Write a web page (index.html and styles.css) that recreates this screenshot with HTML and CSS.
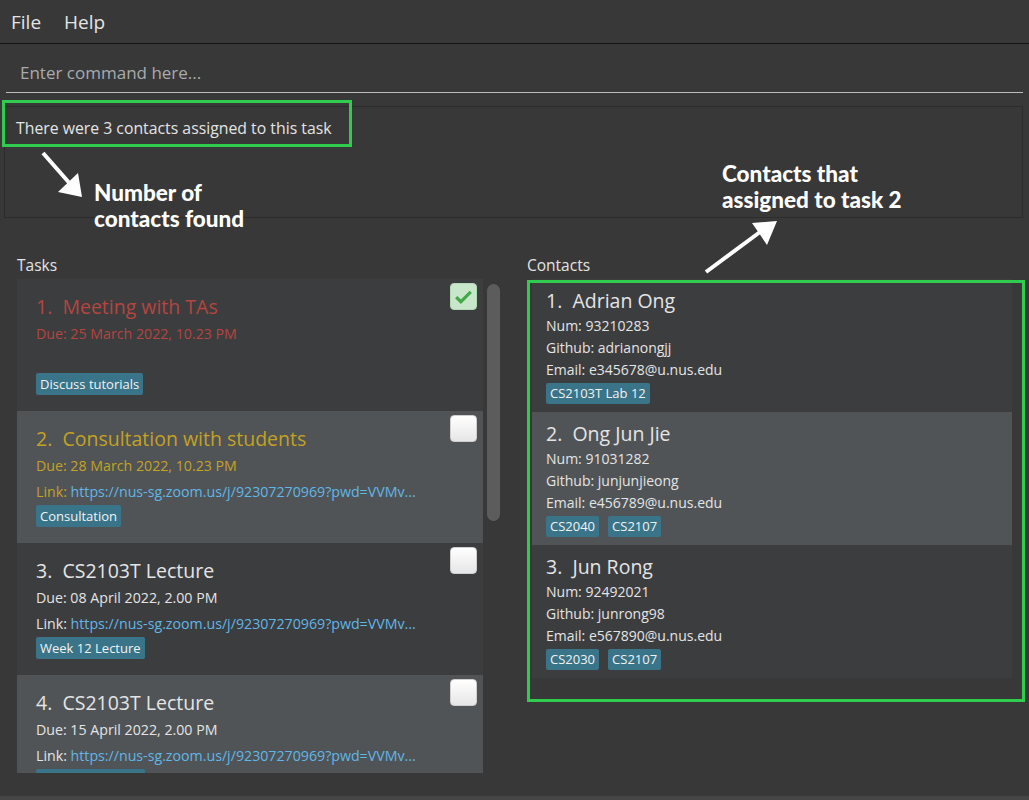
FILE: index.html
```html
<html>
  <head>
    <title>Task manager</title>
    <link rel="stylesheet" href="styles.css">
  </head>
  <body>
    <nav class="menubar">
      <span>File</span>
      <span>Help</span>
    </nav>

    <div class="command">
      <div class="command-input">Enter command here...</div>
    </div>

    <div class="result">
      <p>There were 3 contacts assigned to this task</p>
    </div>

    <main class="panels">
      <section class="panel">
        <h2>Tasks</h2>
        <div class="task-wrap">
          <ul class="task-list">
            <li class="task dark done">
              <div class="task-body">
                <div class="title">1.&nbsp;&nbsp;Meeting with TAs</div>
                <div class="row">Due: 25 March 2022, 10.23 PM</div>
                <div class="row"></div>
                <div class="row"><span class="tag">Discuss tutorials</span></div>
              </div>
              <span class="check checked">
                <svg viewBox="0 0 24 24"><path d="M5 12.5l4.5 4.5L19 7.5" /></svg>
              </span>
            </li>
            <li class="task light soon">
              <div class="task-body">
                <div class="title">2.&nbsp;&nbsp;Consultation with students</div>
                <div class="row">Due: 28 March 2022, 10.23 PM</div>
                <div class="row">Link: <a>https://nus-sg.zoom.us/j/92307270969?pwd=VVMv...</a></div>
                <div class="row"><span class="tag">Consultation</span></div>
              </div>
              <span class="check"></span>
            </li>
            <li class="task dark">
              <div class="task-body">
                <div class="title">3.&nbsp;&nbsp;CS2103T Lecture</div>
                <div class="row">Due: 08 April 2022, 2.00 PM</div>
                <div class="row">Link: <a>https://nus-sg.zoom.us/j/92307270969?pwd=VVMv...</a></div>
                <div class="row"><span class="tag">Week 12 Lecture</span></div>
              </div>
              <span class="check"></span>
            </li>
            <li class="task light">
              <div class="task-body">
                <div class="title">4.&nbsp;&nbsp;CS2103T Lecture</div>
                <div class="row">Due: 15 April 2022, 2.00 PM</div>
                <div class="row">Link: <a>https://nus-sg.zoom.us/j/92307270969?pwd=VVMv...</a></div>
                <div class="row"><span class="tag">Week 12 Lecture</span></div>
              </div>
              <span class="check"></span>
            </li>
          </ul>
          <div class="scroll-track"><div class="scroll-thumb"></div></div>
        </div>
      </section>

      <section class="panel">
        <h2>Contacts</h2>
        <ul class="contact-list">
          <li class="contact dark">
            <div class="name">1.&nbsp;&nbsp;Adrian Ong</div>
            <div class="line">Num: 93210283</div>
            <div class="line">Github: adrianongjj</div>
            <div class="line">Email: e345678@u.nus.edu</div>
            <div class="tags"><span class="tag">CS2103T Lab 12</span></div>
          </li>
          <li class="contact light">
            <div class="name">2.&nbsp;&nbsp;Ong Jun Jie</div>
            <div class="line">Num: 91031282</div>
            <div class="line">Github: junjunjieong</div>
            <div class="line">Email: e456789@u.nus.edu</div>
            <div class="tags"><span class="tag">CS2040</span><span class="tag">CS2107</span></div>
          </li>
          <li class="contact dark">
            <div class="name">3.&nbsp;&nbsp;Jun Rong</div>
            <div class="line">Num: 92492021</div>
            <div class="line">Github: junrong98</div>
            <div class="line">Email: e567890@u.nus.edu</div>
            <div class="tags"><span class="tag">CS2030</span><span class="tag">CS2107</span></div>
          </li>
        </ul>
      </section>
    </main>

    <footer class="statusbar"></footer>

    <!-- callouts drawn over the app -->
    <div class="mark mark-result"></div>
    <div class="mark mark-contacts"></div>
    <svg class="arrows" width="1029" height="800">
      <line x1="43" y1="153" x2="72" y2="186" />
      <polygon points="58,192 82,197 78,173" />
      <line x1="706" y1="272" x2="760" y2="232" />
      <polygon points="752,223 777,221 767,245" />
    </svg>
    <div class="note note-found">Number of<br>contacts found</div>
    <div class="note note-assigned">Contacts that<br>assigned to task 2</div>
  </body>
</html>
```

FILE: styles.css
```css
body {
  margin: 0;
  width: 1029px;
  height: 800px;
  display: flex;
  flex-direction: column;
  position: relative;
  overflow: hidden;
  background: #383838;
  color: #e4e4e4;
  font-family: "Open Sans", "Noto Sans", sans-serif;
}
ul {
  list-style: none;
  margin: 0;
  padding: 0;
}
.menubar {
  height: 43px;
  display: flex;
  align-items: center;
  gap: 23px;
  padding-left: 11px;
  border-bottom: 1px solid #141414;
  font-size: 19px;
}
.command {
  padding: 0 6px;
}
.command-input {
  height: 38px;
  line-height: 38px;
  padding-top: 10px;
  padding-left: 14px;
  border-bottom: 1px solid #bcbcbc;
  color: #a8abaf;
  font-size: 17px;
}
.result {
  margin: 13px 6px 0 4px;
  height: 110px;
  border: 1px solid #2c2c2c;
}
.result p {
  margin: 0;
  padding: 10px 11px;
  line-height: 22px;
  font-size: 15.8px;
}
.panels {
  display: grid;
  grid-template-columns: 486px 498px;
  column-gap: 24px;
  padding-left: 17px;
  margin-top: 37px;
}
.panel h2 {
  margin: 0 0 4px;
  font-size: 15.5px;
  font-weight: normal;
  line-height: 20px;
}
.task-wrap {
  display: flex;
  height: 494px;
}
.task-list {
  width: 466px;
  flex-shrink: 0;
  overflow: hidden;
}
.scroll-track {
  width: 20px;
  box-sizing: border-box;
  padding: 5px 3px 0 4px;
}
.scroll-thumb {
  height: 237px;
  border-radius: 7px;
  background: #5c5c5c;
}
.dark {
  background: #3c3d3f;
}
.light {
  background: #505457;
}
.task {
  height: 132px;
  display: flex;
  padding: 4px 6px 0 19px;
  box-sizing: border-box;
}
.task-body {
  flex: 1;
  padding-top: 10px;
}
.title {
  font-size: 19.5px;
  line-height: 28px;
}
.row {
  height: 26px;
  line-height: 26px;
  font-size: 14.2px;
}
.done .title,
.done .row {
  color: #b5453f;
}
.soon .title,
.soon .row {
  color: #c4a223;
}
.row a {
  color: #62b6e6;
}
.tag {
  display: inline-block;
  padding: 0 4px;
  line-height: 22px;
  border-radius: 2px;
  background: #3a7489;
  color: #f2f2f2;
  font-size: 13px;
}
.check {
  width: 27px;
  height: 27px;
  box-sizing: border-box;
  border-radius: 4px;
  border: 1px solid #cfcfcf;
  background: linear-gradient(#ffffff, #e6e6e6);
}
.check.checked {
  border-color: #b3d9b5;
  background: #c8e6c9;
}
.check svg {
  width: 25px;
  height: 25px;
  fill: none;
  stroke: #43a84a;
  stroke-width: 3;
}
.contact-list {
  margin-left: 5px;
  width: 480px;
}
.contact {
  height: 133px;
  box-sizing: border-box;
  padding: 8px 14px 0;
}
.name {
  font-size: 19.5px;
  line-height: 28px;
}
.line {
  font-size: 14px;
  line-height: 22px;
}
.tags {
  display: flex;
  gap: 9px;
  padding-top: 2px;
}
.tags .tag {
  line-height: 21px;
}
.statusbar {
  margin-top: auto;
  height: 4px;
  background: #464646;
}
.mark {
  position: absolute;
  border: 3px solid #2fcc4e;
}
.mark-result {
  left: 2px;
  top: 100px;
  width: 344px;
  height: 41px;
}
.mark-contacts {
  left: 527px;
  top: 280px;
  width: 492px;
  height: 416px;
}
.arrows {
  position: absolute;
  left: 0;
  top: 0;
}
.arrows line {
  stroke: #fff;
  stroke-width: 4;
}
.arrows polygon {
  fill: #fff;
}
.note {
  position: absolute;
  color: #fff;
  font-family: Lato, sans-serif;
  font-weight: 900;
  font-size: 22.5px;
  line-height: 26px;
}
.note-found {
  left: 94px;
  top: 180px;
}
.note-assigned {
  left: 722px;
  top: 161px;
}
```
